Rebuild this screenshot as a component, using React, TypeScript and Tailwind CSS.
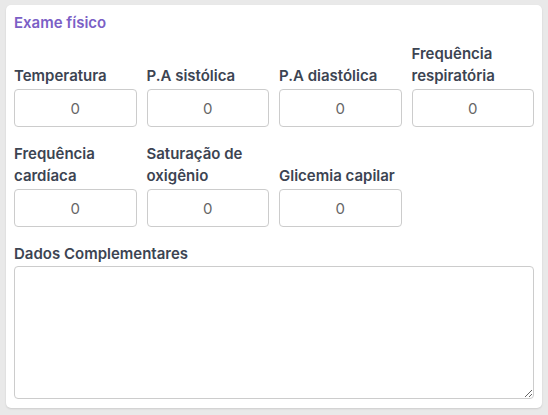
import React from "react";

const Field = ({ label }: { label: React.ReactNode }) => (
  <div className="flex flex-col justify-end">
    <label className="text-[15px] leading-[22px] font-semibold text-[#3c4452] mb-[2px]">{label}</label>
    <input
      readOnly
      value="0"
      className="h-[38px] w-full rounded-[4px] border border-[#cccccc] bg-white text-center text-[15px] text-[#666] outline-none"
    />
  </div>
);

export default function App() {
  return (
    <div className="min-h-[415px] w-[548px] bg-[#e9e9e9] pt-[5px] px-[6px] pb-[7px]" style={{ fontFamily: "Inter, 'Noto Sans', sans-serif" }}>
      <div className="rounded-[5px] bg-white px-[8px] pt-[7px] pb-[9px] shadow-[0_1px_2px_rgba(0,0,0,0.12)]">
        <h2 className="text-[15px] leading-[22px] font-semibold text-[#7b5fc6]">Exame físico</h2>
        <div className="mt-[9px] grid grid-cols-4 gap-x-[10px] gap-y-[16px]">
          <Field label="Temperatura" />
          <Field label="P.A sistólica" />
          <Field label="P.A diastólica" />
          <Field label={<>Frequência<br />respiratória</>} />
          <Field label={<>Frequência<br />cardíaca</>} />
          <Field label={<>Saturação de<br />oxigênio</>} />
          <Field label="Glicemia capilar" />
        </div>
        <div className="mt-[16px] flex flex-col">
          <label className="text-[15px] leading-[22px] font-semibold text-[#3c4452] mb-[1px]">Dados Complementares</label>
          <textarea className="h-[133px] w-full rounded-[4px] border border-[#cccccc] bg-white outline-none" />
        </div>
      </div>
    </div>
  );
}
